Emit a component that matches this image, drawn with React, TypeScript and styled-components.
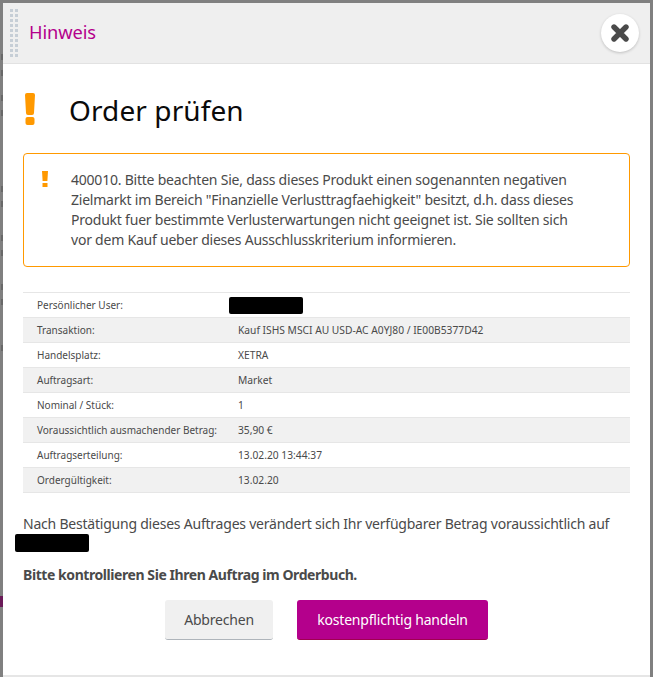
import React from "react";
import styled, { createGlobalStyle } from "styled-components";

const Global = createGlobalStyle`
  html, body { margin: 0; padding: 0; height: 100%; background: #808080; }
  body { font-family: "Noto Sans", "Open Sans", sans-serif; overflow: hidden; }
`;
const Backdrop = styled.div`
  position: relative; width: 653px; height: 677px; box-sizing: border-box; padding: 3px 3px 0; background: #808080;
`;
const Residue = styled.svg`
  position: absolute; left: 0; top: 0; width: 3px; height: 677px;
`;
const Modal = styled.div`
  height: 674px; box-sizing: border-box; background: #fff; border-bottom: 2px solid #e6e6e6;
  display: flex; flex-direction: column;
`;
const Header = styled.header`
  height: 61px; box-sizing: border-box; background: #efefef; border-bottom: 1px solid #e2e2e2;
  display: flex; align-items: center; padding: 0 11px 0 7px;
`;
const Grip = styled.div`
  width: 8px; height: 48px; margin-right: 11px;
  background-image: linear-gradient(90deg, #c6ced6 3px, transparent 3px, transparent 5px, #c6ced6 5px);
  -webkit-mask-image: linear-gradient(#000 3px, transparent 3px);
  mask-image: linear-gradient(#000 3px, transparent 3px);
  -webkit-mask-size: 100% 5px; mask-size: 100% 5px;
`;
const Title = styled.h2`
  margin: 0 0 4px; flex: 1; font-size: 18.3px; font-weight: 400; color: #b4008c; letter-spacing: -0.1px;
`;
const Close = styled.button`
  width: 38px; height: 38px; padding: 0; border: none; border-radius: 50%; background: #fff;
  box-shadow: 0 1px 3px rgba(0,0,0,.2); display: flex; align-items: center; justify-content: center;
`;
const Body = styled.main`
  flex: 1; padding: 0 20px; display: flex; flex-direction: column;
`;
const Heading = styled.div`
  display: flex; align-items: center; height: 89px;
`;
const HeadingIcon = styled.svg`
  width: 10px; height: 32px; margin: 0 34px 0 2px; flex: none;
`;
const HeadingText = styled.h1`
  margin: 0; font-size: 28px; line-height: 36px; font-weight: 400; color: #0a0a0a; letter-spacing: 0.1px;
  position: relative; top: 1px;
`;
const Alert = styled.div`
  height: 114px; box-sizing: border-box; border: 1px solid #f90; border-radius: 4px;
  display: flex; padding: 16px 10px 0 18px; margin-bottom: 25px;
`;
const AlertIcon = styled.svg`
  width: 6px; height: 16px; margin: 1px 23px 0 0; flex: none;
`;
const AlertText = styled.p`
  margin: 0; font-size: 14px; line-height: 20px; color: #4a4a4a; letter-spacing: -0.22px; white-space: nowrap;
`;
const Rows = styled.div`
  border-top: 1px solid #e6e6e6;
`;
const Row = styled.div<{ $alt?: boolean }>`
  height: 25px; box-sizing: border-box; border-bottom: 1px solid #e6e6e6;
  background: ${(p) => (p.$alt ? "#f1f1f1" : "#fff")};
  display: flex; align-items: center; padding-left: 14px;
  color: #4a4a4a;
`;
const Label = styled.span`
  width: 201px; flex: none; font-size: 10px;
`;
const Value = styled.span`
  font-size: 10.25px;
`;
const Redaction = styled.span<{ $w: number; $h: number }>`
  display: block; width: ${(p) => p.$w}px; height: ${(p) => p.$h}px; background: #000; border-radius: 2px;
`;
const RowRedaction = styled(Redaction)`
  margin-left: -9px;
`;
const Info = styled.p`
  margin: 21px 0 0; font-size: 14px; line-height: 20px; color: #4a4a4a; letter-spacing: -0.22px;
  white-space: nowrap;
`;
const InfoRedaction = styled(Redaction)`
  margin: 0 0 0 -8px;
`;
const Strong = styled.p`
  margin: 13px 0 0; font-size: 14px; line-height: 20px; font-weight: 700; color: #4a4a4a; letter-spacing: -0.43px;
`;
const Actions = styled.div`
  display: flex; justify-content: center; gap: 24px; margin-top: 15px;
`;
const Button = styled.button<{ $primary?: boolean }>`
  height: 40px; padding: 0; border: none; border-radius: 3px; font-family: inherit; font-size: 14px;
  letter-spacing: -0.2px;
  background: ${(p) => (p.$primary ? "#b4008c" : "#f0f0f0")};
  color: ${(p) => (p.$primary ? "#fff" : "#4a4a4a")};
  border-bottom: 1px solid ${(p) => (p.$primary ? "#a00050" : "#aeb4ba")};
  width: ${(p) => (p.$primary ? "191px" : "108px")};
`;

const rows: [string, React.ReactNode][] = [
  ["Persönlicher User:", <RowRedaction $w={74} $h={17} />],
  ["Transaktion:", <Value>Kauf ISHS MSCI AU USD-AC A0YJ80 / IE00B5377D42</Value>],
  ["Handelsplatz:", <Value>XETRA</Value>],
  ["Auftragsart:", <Value>Market</Value>],
  ["Nominal / Stück:", <Value>1</Value>],
  ["Voraussichtlich ausmachender Betrag:", <Value>35,90 €</Value>],
  ["Auftragserteilung:", <Value>13.02.20 13:44:37</Value>],
  ["Ordergültigkeit:", <Value>13.02.20</Value>],
];

const marks = [54, 70, 95, 110, 186, 201, 235, 250, 284, 299, 345];

export default function App() {
  return (
    <Backdrop>
      <Global />
      <Residue viewBox="0 0 3 677">
        {marks.map((y) => (
          <rect key={y} x="1" y={y} width="2" height="6" fill="#686868" />
        ))}
        <rect x="0" y="596" width="3" height="11" fill="#6a1a58" />
      </Residue>
      <Modal>
        <Header>
          <Grip />
          <Title>Hinweis</Title>
          <Close aria-label="Schließen">
            <svg width="18" height="18" viewBox="0 0 18 18">
              <path d="M3 3 L15 15 M15 3 L3 15" stroke="#4a4a4a" strokeWidth="5.4" strokeLinecap="round" />
            </svg>
          </Close>
        </Header>
        <Body>
          <Heading>
            <HeadingIcon viewBox="0 0 10 32">
              <path d="M2 0h6a2 2 0 0 1 2 2l-1 18a2 2 0 0 1-2 2H3a2 2 0 0 1-2-2L0 2a2 2 0 0 1 2-2z" fill="#f90" />
              <rect x=".5" y="24" width="9" height="8" rx="2" fill="#f90" />
            </HeadingIcon>
            <HeadingText>Order prüfen</HeadingText>
          </Heading>
          <Alert>
            <AlertIcon viewBox="0 0 6 16">
              <path d="M0 0h6l-.6 10H.6z" fill="#f90" />
              <rect x=".5" y="12" width="5" height="4" fill="#f90" />
            </AlertIcon>
            <AlertText>
              400010. Bitte beachten Sie, dass dieses Produkt einen sogenannten negativen<br />
              Zielmarkt im Bereich "Finanzielle Verlusttragfaehigkeit" besitzt, d.h. dass dieses<br />
              Produkt fuer bestimmte Verlusterwartungen nicht geeignet ist. Sie sollten sich<br />
              vor dem Kauf ueber dieses Ausschlusskriterium informieren.
            </AlertText>
          </Alert>
          <Rows>
            {rows.map(([l, v], i) => (
              <Row key={l} $alt={i % 2 === 1}>
                <Label>{l}</Label>
                {v}
              </Row>
            ))}
          </Rows>
          <Info>
            Nach Bestätigung dieses Auftrages verändert sich Ihr verfügbarer Betrag voraussichtlich auf
            <InfoRedaction $w={74} $h={18} />
          </Info>
          <Strong>Bitte kontrollieren Sie Ihren Auftrag im Orderbuch.</Strong>
          <Actions>
            <Button>Abbrechen</Button>
            <Button $primary>kostenpflichtig handeln</Button>
          </Actions>
        </Body>
      </Modal>
    </Backdrop>
  );
}
